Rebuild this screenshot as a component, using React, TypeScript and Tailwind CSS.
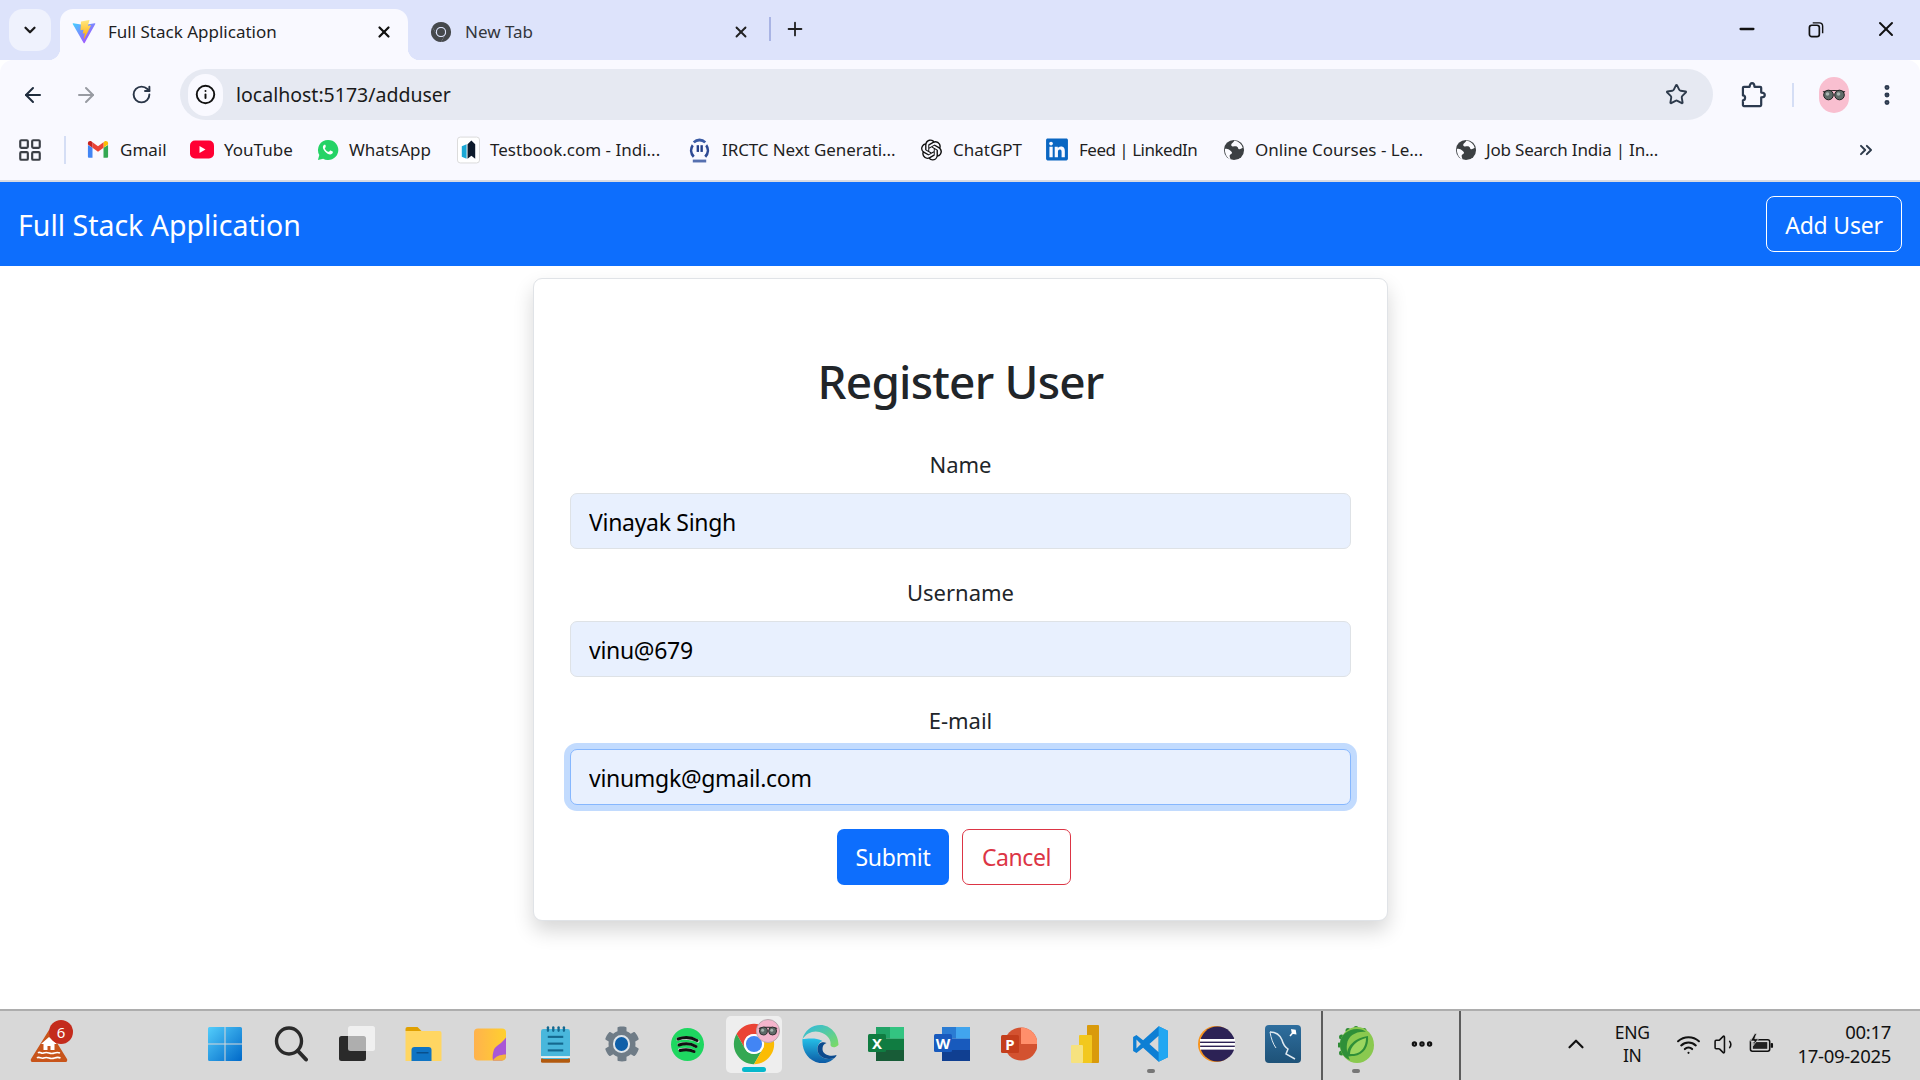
import React from "react";
import { ArrowLeft, ArrowRight, RotateCw, Info, Star, EllipsisVertical, ChevronDown, X, Plus, Minus, LayoutGrid, ChevronsRight, ChevronUp, Wifi, Volume1, Ellipsis } from "lucide-react";
import { FaLinkedin, FaCog, FaSpotify } from "react-icons/fa";
import { SiOpenai } from "react-icons/si";

const Vite = () => (
  <svg viewBox="0 0 32 32" className="w-[26px] h-[26px]">
    <defs>
      <linearGradient id="va" x1="0" y1="0" x2="1" y2="1"><stop offset="0" stopColor="#41d1ff" /><stop offset="1" stopColor="#bd34fe" /></linearGradient>
      <linearGradient id="vb" x1="0" y1="0" x2="0" y2="1"><stop offset="0" stopColor="#ffea83" /><stop offset="1" stopColor="#ffa800" /></linearGradient>
    </defs>
    <path d="M29.88 6.15 16.8 29.5a.7.7 0 0 1-1.23 0L2.12 6.15a.7.7 0 0 1 .75-1.04L16 7.46a.7.7 0 0 0 .25 0l12.88-2.35a.7.7 0 0 1 .75 1.04Z" fill="url(#va)" />
    <path d="M22.3 1.1 12.6 3a.35.35 0 0 0-.28.33l-.6 10.07a.35.35 0 0 0 .43.36l2.7-.62a.35.35 0 0 1 .43.41l-.8 3.93a.35.35 0 0 0 .45.41l1.67-.5a.35.35 0 0 1 .45.4l-1.28 6.18c-.08.39.43.6.65.27l.15-.23 7.9-15.77a.35.35 0 0 0-.38-.5l-2.78.54a.35.35 0 0 1-.4-.44l1.82-6.3a.35.35 0 0 0-.41-.44Z" fill="url(#vb)" />
  </svg>
);

const ChromeLogo = ({ r = "#ea4335", g = "#34a853", y = "#fbbc04", c = "#4285f4", ring = "#ffffff", size = "w-[44px] h-[44px]" }) => (
  <svg viewBox="0 0 48 48" className={size}>
    <path d="M43.05 13A22 22 0 0 0 4.95 13L14.47 29.5A11 11 0 0 1 24 13Z" fill={r} />
    <path d="M4.95 13A22 22 0 0 0 24 46L33.53 29.5A11 11 0 0 1 14.47 29.5Z" fill={g} />
    <path d="M24 46A22 22 0 0 0 43.05 13H24A11 11 0 0 1 33.53 29.5Z" fill={y} />
    <circle cx="24" cy="24" r="11" fill={ring} />
    <circle cx="24" cy="24" r="8.8" fill={c} />
  </svg>
);

const Globe = () => (
  <svg viewBox="0 0 24 24" className="w-[22px] h-[24px]">
    <circle cx="12" cy="12" r="11" fill="#3c4043" />
    <path d="M12.5 1.5c-1 2.5-3 2.5-3.5 4.5s2 2.5 3.5 2 3.5 0 4 2 3 1 5-.5c-1-4-4-7-9-8Z" fill="#fbfbff" />
    <path d="M2 11c2-1 4 0 6.500 2s1 3-.5 4-.5 3 .5 5.500C5 21.500 2 17 2 11Z" fill="#fbfbff" />
  </svg>
);

const Glasses = ({ w = 24 }: { w?: number }) => (
  <svg viewBox="0 0 24 12" width={w} height={w / 2}>
    <path d="M1 3c3-2 19-2 22 0" stroke="#222" strokeWidth="1.200" fill="none" />
    <circle cx="6.500" cy="6" r="4.800" fill="#5f6b68" stroke="#222" strokeWidth="1" />
    <circle cx="17.500" cy="6" r="4.800" fill="#5f6b68" stroke="#222" strokeWidth="1" />
    <circle cx="5.500" cy="5" r="1.800" fill="#aab6b2" />
    <circle cx="16.500" cy="5" r="1.800" fill="#aab6b2" />
  </svg>
);

const Gmail = () => (
  <svg viewBox="0 0 24 20" className="w-[22px] h-[19px]">
    <path d="M1 5v13a1 1 0 0 0 1 1h4V8Z" fill="#4285f4" />
    <path d="M18 8v11h4a1 1 0 0 0 1-1V5Z" fill="#34a853" />
    <path d="M18 2v6l5-3.500V3c0-2-2.300-3-4-1.800Z" fill="#fbbc04" />
    <path d="M6 8V2l6 4.500L18 2v6l-6 4.500Z" fill="#ea4335" />
    <path d="M1 3v1.500L6 8V2L5 1.200C3.300 0 1 1 1 3Z" fill="#c5221f" />
  </svg>
);

const YouTube = () => (
  <svg viewBox="0 0 24 18" className="w-[24px] h-[19px]">
    <rect width="24" height="18" rx="5" fill="#ff0033" />
    <path d="M9.500 5.500v7l6-3.500Z" fill="#fff" />
  </svg>
);

const WhatsApp = () => (
  <svg viewBox="0 0 24 24" className="w-[22px] h-[24px]">
    <path d="M12 1a11 11 0 0 0-9.500 16.500L1 23l5.700-1.500A11 11 0 1 0 12 1Z" fill="#25d366" />
    <path d="M8.300 6.300c-.5 0-1.500.7-1.800 2-.3 1.400.3 3.200 2.200 5.300 2 2.100 4 3.300 5.800 3.200 1.300 0 2.600-1 2.800-2 .1-.6 0-1-.2-1.100l-2.300-1.100c-.3-.1-.5 0-.7.200l-.9 1.100c-.2.200-.4.200-.7.100-1.700-.7-3-1.900-3.900-3.500-.1-.2-.1-.4.100-.6l.7-.9c.1-.2.200-.4.100-.6L9.400 6.900c-.2-.5-.5-.6-1.100-.6Z" fill="#fff" />
  </svg>
);

const Testbook = () => (
  <svg viewBox="0 0 24 28" className="w-[23px] h-[28px]">
    <rect x=".5" y=".5" width="23" height="27" rx="3" fill="#fff" stroke="#d9d9d9" />
    <path d="M5 10l5-2v15l-5-2Z" fill="#1ba8d5" />
    <path d="M11 8l4-4 4 4v15l-4-3-4 3Z" fill="#0e1b2c" />
  </svg>
);

const Irctc = () => (
  <svg viewBox="0 0 24 28" className="w-[23px] h-[28px]">
    <path d="M12 2a11 11 0 0 1 7 3l-2 2a8 8 0 0 0-5-2 8 8 0 0 0-5 2L5 5a11 11 0 0 1 7-3Z" fill="#3b5ba5" />
    <path d="M4 8l2 2a8 8 0 0 0 1 10l-2 2a11 11 0 0 1-1-14ZM20 8l-2 2a8 8 0 0 1-1 10l2 2a11 11 0 0 0 1-14Z" fill="#2e4a94" />
    <rect x="9" y="9" width="2.500" height="7" fill="#243f88" />
    <rect x="13" y="9" width="2.500" height="7" fill="#243f88" />
    <rect x="5" y="24" width="14" height="3" fill="#5670b0" />
  </svg>
);

const Bm = ({ outer, icon, children, w, text = "" }: { outer: string; icon: React.ReactNode; children: React.ReactNode; w: string; text?: string }) => (
  <div className={`flex items-center shrink-0 ${outer}`}>
    <span className={`flex items-center shrink-0 ${w}`}>{icon}</span>
    <span className={`text-[17px] text-[#1f1f1f] whitespace-nowrap ${text}`}>{children}</span>
  </div>
);

const Slot = ({ children }: { children: React.ReactNode }) => (
  <div className="relative flex w-[66.125px] h-full pb-[3px] items-center justify-center shrink-0">{children}</div>
);

const Dot = () => <span className="absolute left-1/2 -translate-x-1/2 bottom-[7px] w-[8px] h-[4px] rounded-full bg-[#777]" />;

const Weather = () => (
  <div className="relative w-[38px] h-[42px] mb-[8px]">
    <svg viewBox="0 0 38 34" className="absolute left-0 bottom-0 w-[38px] h-[34px]">
      <path d="M19 1 37 30a2 2 0 0 1-2 3H3a2 2 0 0 1-2-3Z" fill="#c8541a" />
      <path d="M19 8l-8 7h2.500v6h4v-4h3v4h4v-6H27Z" fill="#fff" />
      <path d="M8 24c2-2 3 1 5.500 0s3-1 5.500 0 3 1 5.500 0 3-1 5.500 0M7 29c2-2 4 1 6.500 0s3-1 5.500 0 3 1 5.500 0 4-1 6 0" stroke="#fff" strokeWidth="1.600" fill="none" />
    </svg>
    <span className="absolute right-[-5px] top-[-1px] w-[24px] h-[24px] rounded-full bg-[#c42b1c] text-white text-[15px] leading-[24px] text-center">6</span>
  </div>
);

const Start = () => (
  <svg viewBox="0 0 36 36" className="w-[36px] h-[36px]">
    <defs>
      <linearGradient id="st" x1="0" y1="0" x2="1" y2="1"><stop offset="0" stopColor="#53cdfb" /><stop offset="1" stopColor="#0068c8" /></linearGradient>
    </defs>
    <path d="M1 2.500A1.500 1.500 0 0 1 2.500 1H17.500V17.500H1ZM18.500 1H33.500A1.500 1.500 0 0 1 35 2.500V17.500H18.500ZM1 18.500H17.500V35H2.500A1.500 1.500 0 0 1 1 33.500ZM18.500 18.500H35V33.500A1.500 1.500 0 0 1 33.500 35H18.500Z" fill="url(#st)" />
  </svg>
);

const Search = () => (
  <svg viewBox="0 0 34 36" className="w-[34px] h-[36px]">
    <ellipse cx="15" cy="15" rx="12.500" ry="13" fill="none" stroke="#2a2a2a" strokeWidth="3.400" />
    <path d="M24 25l8 8.500" stroke="#2a2a2a" strokeWidth="4" strokeLinecap="round" />
  </svg>
);

const TaskView = () => (
  <svg viewBox="0 0 36 36" className="w-[36px] h-[36px]">
    <rect x="0" y="10" width="27" height="25" rx="2.500" fill="#2a2a2a" />
    <rect x="9" y="0" width="27" height="25" rx="2.500" fill="#ffffff" fillOpacity=".62" />
  </svg>
);

const Explorer = () => (
  <svg viewBox="0 0 36 36" className="w-[37px] h-[36px]">
    <path d="M0 3a2 2 0 0 1 2-2h10l4 4H0Z" fill="#e0a000" />
    <path d="M0 5h34a2 2 0 0 1 2 2v28H0Z" fill="#ffd662" />
    <path d="M6 24a3 3 0 0 1 3-3h14a3 3 0 0 1 3 3v11H6Z" fill="#0f74c4" />
    <rect x="11" y="26" width="12" height="1.500" fill="#084f8c" />
  </svg>
);

const Sticky = () => (
  <svg viewBox="0 0 32 32" className="w-[32px] h-[33px]">
    <defs>
      <linearGradient id="sn" x1="0" y1="0" x2="1" y2="0"><stop offset="0" stopColor="#ffb24d" /><stop offset="1" stopColor="#ffd02e" /></linearGradient>
    </defs>
    <rect width="32" height="32" rx="4" fill="url(#sn)" />
    <path d="M32 9c-4 6-10 8-12 12-1 3-2 7-1 11h9c3-1 4-3 4-6Z" fill="#a957d6" />
    <path d="M19 32c2-4 7-6 13-6 0 4-2 6-5 6Z" fill="#f4b63d" />
  </svg>
);

const Notepad = () => (
  <svg viewBox="0 0 30 38" className="w-[29px] h-[37px]">
    <rect x="0" y="33" width="30" height="5" rx="1.500" fill="#b25a0f" />
    <rect x="0" y="3" width="30" height="31" rx="2.500" fill="#49b7dc" />
    <rect x="0" y="31" width="30" height="2" fill="#e8f0f2" />
    <g fill="#14688f"><rect x="6" y="0" width="2.400" height="6" rx="1.200" /><rect x="11.500" y="0" width="2.400" height="6" rx="1.200" /><rect x="17" y="0" width="2.400" height="6" rx="1.200" /><rect x="22.500" y="0" width="2.400" height="6" rx="1.200" /></g>
    <g fill="#14688f"><rect x="7" y="10" width="16" height="2.200" /><rect x="7" y="17" width="16" height="2.200" /><rect x="7" y="24" width="16" height="2.200" /></g>
  </svg>
);

const Settings = () => (
  <span className="relative flex w-[36px] h-[36px] items-center justify-center">
    <FaCog className="w-[36px] h-[36px] text-[#6f7c87]" />
    <span className="absolute w-[17px] h-[18px] rounded-full bg-[#0f5fa8] border-[2px] border-[#dfe5ea]" />
  </span>
);

const Spotify = () => (
  <span className="relative flex w-[33px] h-[37px] items-center justify-center">
    <FaSpotify className="w-[33px] h-[37px] text-[#1ed760]" />
    <svg viewBox="0 0 33 37" className="absolute inset-0 w-[33px] h-[37px]">
      <path d="M7 13c6-2 13-2 19 1.500M8 19c5-1.500 12-1.500 17 1.500M9 24.500c4-1 10-1 14 1" stroke="#111" strokeWidth="3" strokeLinecap="round" fill="none" />
    </svg>
  </span>
);

const Edge = () => (
  <svg viewBox="0 0 36 38" className="w-[37px] h-[38px]">
    <defs>
      <linearGradient id="eb" x1="0" y1="0" x2="0" y2="1"><stop offset="0" stopColor="#25c0e8" /><stop offset="1" stopColor="#0c59a4" /></linearGradient>
      <linearGradient id="eg" x1="0" y1="0" x2="1" y2="1"><stop offset="0" stopColor="#2bb8e5" /><stop offset="1" stopColor="#7fdc5f" /></linearGradient>
    </defs>
    <path d="M36 20c0-11-8-20-18-20C9 0 2 6 0 14c4-6 11-9 17-7 8 2 12 8 11 13 0 2 4 4 8 0Z" fill="url(#eg)" />
    <path d="M0 14C-1 26 6 36 17 38c6 1 11-1 15-5-8 3-17-1-17-9 0-4 2-7 5-8-7-4-16-2-20-2Z" fill="url(#eb)" />
    <path d="M15 24c0 8 9 12 17 9 1-1 2-2 2-3-6 2-14 0-14-6 0-3 1-5 4-6-5-2-9 1-9 6Z" fill="#0b4a8e" />
  </svg>
);

const Office = ({ letter, a, b, c, d, box }: { letter: string; a: string; b: string; c: string; d: string; box: string }) => (
  <svg viewBox="0 0 36 36" className="w-[36px] h-[36px]">
    <rect x="8" y="1" width="28" height="11.500" fill={a} />
    <rect x="8" y="12.500" width="28" height="11.500" fill={b} />
    <rect x="8" y="24" width="28" height="11" fill={c} />
    <rect x="22" y="1" width="14" height="11.500" fill={d} />
    <rect x="0" y="8" width="18" height="18" rx="1.500" fill={box} />
    <text x="9" y="22.500" textAnchor="middle" fontSize="15" fontWeight="700" fill="#fff" fontFamily="Noto Sans, sans-serif">{letter}</text>
  </svg>
);

const Ppt = () => (
  <svg viewBox="0 0 36 36" className="w-[36px] h-[36px]">
    <circle cx="20" cy="18" r="16.500" fill="#d35230" />
    <path d="M20 1.500A16.500 16.500 0 0 1 36.500 18H20Z" fill="#ff8f6b" />
    <rect x="0" y="9" width="18" height="18" rx="1.500" fill="#c43e1c" />
    <text x="9" y="23.500" textAnchor="middle" fontSize="15" fontWeight="700" fill="#fff" fontFamily="Noto Sans, sans-serif">P</text>
  </svg>
);

const PowerBi = () => (
  <svg viewBox="0 0 28 38" className="w-[28px] h-[38px]">
    <rect x="16" y="0" width="12" height="38" rx="1" fill="#d99a0b" />
    <rect x="8" y="10" width="13" height="28" rx="1" fill="#f2c81e" />
    <rect x="0" y="20" width="12" height="18" rx="1" fill="#f6e27f" />
  </svg>
);

const VsCode = () => (
  <svg viewBox="0 0 100 100" className="w-[37px] h-[38px]">
    <path fillRule="evenodd" d="M72 2 97 14v72L72 98 30 60 12 74 3 69V31l9-5 18 14ZM72 28 47 50l25 22ZM12 38v24l12-12Z" fill="#0d7fd4" />
    <path d="M72 2 97 14v72L72 98V72L72 28Z" fill="#22a7f2" />
  </svg>
);

const Eclipse = () => (
  <svg viewBox="0 0 37 38" className="w-[37px] h-[38px]">
    <circle cx="18" cy="19" r="18" fill="#f7941e" />
    <circle cx="19.500" cy="19" r="17.500" fill="#2c2255" />
    <rect x="2" y="14" width="35" height="2.600" fill="#fff" />
    <rect x="2" y="18" width="35" height="2.600" fill="#fff" />
    <rect x="2" y="22" width="35" height="2.600" fill="#fff" />
  </svg>
);

const Workbench = () => (
  <svg viewBox="0 0 36 38" className="w-[36px] h-[38px]">
    <defs>
      <linearGradient id="wb" x1="0" y1="0" x2="0" y2="1"><stop offset="0" stopColor="#2e6e9e" /><stop offset="1" stopColor="#1e5278" /></linearGradient>
    </defs>
    <rect width="36" height="38" rx="4" fill="url(#wb)" />
    <path d="M5 7c6 0 10 3 12 8 1 4 3 7 6 9l-2 5 9 5" stroke="#dfe9f0" strokeWidth="1.500" fill="none" />
    <path d="M5 7c1 6 3 12 6 16" stroke="#dfe9f0" strokeWidth="1" fill="none" />
    <path d="M25 11l3.500-4M27 5l3 .5.500 3-3-.5Z" stroke="#fff" strokeWidth="1.600" fill="#fff" />
  </svg>
);

const Spring = () => (
  <svg viewBox="0 0 36 38" className="w-[36px] h-[38px]">
    <g fill="#2e8b35"><circle cx="18" cy="3.500" r="2.500" /><circle cx="10" cy="5.500" r="2.500" /><circle cx="26" cy="5.500" r="2.500" /><circle cx="3.500" cy="12" r="2.500" /><circle cx="1.500" cy="20" r="2.500" /><circle cx="3.500" cy="28" r="2.500" /></g>
    <ellipse cx="19" cy="20" rx="17" ry="18" fill="#8ac94f" />
    <path d="M2 19C2 11 9 4 19 4c4 0 7 1 9 3-10-1-18 4-19 12-1 6 1 12 3 16C6 33 2 27 2 19Z" fill="#2f8f38" />
    <path d="M9 32c-1-11 8-19 21-21 1 10-4 19-14 20-3 0-5 0-7 1Z" fill="#2f8f38" />
    <path d="M12 29c0-8 8-14 16-16 0 8-4 15-12 16-2 0-3 0-4 0Z" fill="#9bd65f" />
  </svg>
);

const Battery = () => (
  <svg viewBox="0 0 26 22" className="w-[25px] h-[22px]">
    <rect x="1.500" y="6.500" width="20" height="12" rx="2" fill="none" stroke="#111" strokeWidth="1.600" />
    <rect x="4" y="9" width="15" height="7" fill="#222" />
    <rect x="22.500" y="10" width="2.500" height="5" rx="1" fill="#111" />
    <path d="M6 0 1.500 8h4L4 13l6-7.500H6l2-5.500Z" fill="#111" stroke="#d8d8d8" strokeWidth=".8" />
  </svg>
);

const Field = ({ label, value, focus }: { label: string; value: string; focus?: boolean }) => (
  <div className="mb-[28px]">
    <label className="block h-[30px] mb-[14px] text-[22px] leading-[30px] text-center text-[#212529]">{label}</label>
    <input
      readOnly
      value={value}
      className={
        focus
          ? "block w-full h-[56px] px-[18px] pt-[1px] rounded-[7px] bg-[#e8f0fe] text-[23px] tracking-[-0.3px] text-black outline-none border border-[#86b7fe] shadow-[0_0_0_6px_rgba(13,110,253,0.25)]"
          : "block w-full h-[56px] px-[18px] pt-[2px] rounded-[7px] bg-[#e8f0fe] text-[23px] tracking-[-0.3px] text-black outline-none border border-[#dee2e6]"
      }
    />
  </div>
);

export default function App() {
  return (
    <div className="flex flex-col w-[1920px] h-[1080px] overflow-hidden bg-white font-['Noto_Sans',sans-serif]">
      {/* tab strip */}
      <div className="flex h-[60px] shrink-0 bg-[#dde3fb] pt-[9px]">
        <div className="ml-[9px] w-[42px] h-[42px] rounded-[14px] bg-[#eff2fd] flex items-center justify-center">
          <ChevronDown size={18} strokeWidth={3} className="text-[#1a1a1a]" />
        </div>
        <div className="relative ml-[9px] w-[348px] h-[51px] rounded-t-[13px] bg-[#f9f9ff] flex items-center pl-[11px] pb-[5px]">
          <span className="absolute -left-[12px] bottom-0 w-[12px] h-[12px] bg-[radial-gradient(circle_at_0_0,transparent_12px,#f9f9ff_12.500px)]" />
          <span className="absolute -right-[12px] bottom-0 w-[12px] h-[12px] bg-[radial-gradient(circle_at_100%_0,transparent_12px,#f9f9ff_12.500px)]" />
          <Vite />
          <span className="ml-[11px] text-[17px] text-[#1f1f1f] whitespace-nowrap">Full Stack Application</span>
          <X size={18} strokeWidth={3} className="ml-auto mr-[15px] text-[#111]" />
        </div>
        <div className="ml-[22px] w-[339px] h-[51px] flex items-center pb-[5px]">
          <ChromeLogo r="#45484c" g="#45484c" y="#45484c" c="#45484c" ring="#dde3fb" size="w-[22px] h-[24px]" />
          <span className="ml-[13px] text-[17px] text-[#33363b] whitespace-nowrap">New Tab</span>
          <X size={18} strokeWidth={2.500} className="ml-auto mr-[19px] text-[#222]" />
        </div>
        <div className="w-[2px] h-[24px] mt-[8px] bg-[#a9b4e4]" />
        <Plus size={22} strokeWidth={2} className="ml-[13px] mt-[9px] text-[#222]" />
        <Minus size={22} strokeWidth={2.500} className="ml-auto mt-[9px] text-[#111]" />
        <svg viewBox="0 0 18 18" className="ml-[50px] mt-[12px] w-[17px] h-[17px]">
          <rect x="1.500" y="4.500" width="10.500" height="12" rx="2.500" fill="none" stroke="#111" strokeWidth="1.800" />
          <path d="M5 2h7a3.500 3.500 0 0 1 3.500 3.500V13" fill="none" stroke="#111" strokeWidth="1.500" />
        </svg>
        <X size={24} strokeWidth={2} className="ml-[49px] mr-[22px] mt-[8px] text-[#111]" />
      </div>

      {/* toolbar */}
      <div className="flex h-[60px] shrink-0 items-center bg-[#f9f9ff] rounded-t-[13px] pt-[9px]">
        <ArrowLeft size={24} strokeWidth={2} className="ml-[21px] text-[#1f2c3d]" />
        <ArrowRight size={24} strokeWidth={2} className="ml-[29px] text-[#989ba2]" />
        <RotateCw size={21} strokeWidth={2.200} className="ml-[33px] text-[#2a3648]" />
        <div className="ml-[28px] w-[1533px] h-[51px] rounded-full bg-[#e6e9f2] flex items-center pl-[8px] pr-[25px]">
          <span className="w-[35px] h-[42px] rounded-full bg-[#f9f9ff] flex items-center justify-center">
            <Info size={21} strokeWidth={2.200} className="text-[#111]" />
          </span>
          <span className="ml-[13px] text-[19.500px] text-[#1a1a1a]">localhost:5173/adduser</span>
          <Star size={23} strokeWidth={2} className="ml-auto text-[#2d3a4b]" />
        </div>
        <svg viewBox="0 0 26 30" className="ml-[28px] w-[25px] h-[29px]">
          <path d="M3 7h6c0-5 5-5 5 0h6a1 1 0 0 1 1 1v5c5 0 5 5 0 5v8a1 1 0 0 1-1 1H3a1 1 0 0 1-1-1v-5c3 0 3-5 0-5V8a1 1 0 0 1 1-1Z" fill="none" stroke="#2c3a4f" strokeWidth="2.300" strokeLinejoin="round" />
        </svg>
        <div className="ml-[26px] w-[2px] h-[24px] bg-[#d5def5]" />
        <span className="ml-[25px] w-[30px] h-[36px] rounded-full bg-[#f9bfd0] flex items-center justify-center">
          <Glasses w={24} />
        </span>
        <EllipsisVertical size={26} strokeWidth={2.600} className="ml-[25px] text-[#2c3a4f]" />
      </div>

      {/* bookmarks */}
      <div className="flex h-[62px] shrink-0 items-center bg-[#f9f9ff] border-b-[2px] border-[#d9dbe2] pb-[1px]">
        <LayoutGrid size={26} strokeWidth={2} className="ml-[17px] text-[#3b3f46]" />
        <div className="ml-[21px] mr-[21px] w-[2px] h-[28px] bg-[#d5def5]" />
        <Bm outer="w-[103px]" w="w-[33px]" icon={<Gmail />}>Gmail</Bm>
        <Bm outer="w-[127px]" w="w-[34px]" icon={<YouTube />}>YouTube</Bm>
        <Bm outer="w-[140px]" w="w-[32px]" icon={<WhatsApp />}>WhatsApp</Bm>
        <Bm outer="w-[231px]" w="w-[33px]" icon={<Testbook />}>Testbook.com - Indi...</Bm>
        <Bm outer="w-[233px]" w="w-[34px]" text="tracking-[-0.1px]" icon={<Irctc />}>IRCTC Next Generati...</Bm>
        <Bm outer="w-[125px]" w="w-[32px]" icon={<SiOpenai className="w-[21px] h-[24px] text-[#111]" />}>ChatGPT</Bm>
        <Bm outer="w-[177px]" w="w-[33px]" text="tracking-[-0.5px]" icon={<FaLinkedin className="w-[22px] h-[25px] text-[#0a66c2]" />}>Feed | LinkedIn</Bm>
        <Bm outer="w-[232px]" w="w-[32px]" icon={<Globe />}>Online Courses - Le...</Bm>
        <Bm outer="w-[300px]" w="w-[31px]" text="tracking-[-0.2px]" icon={<Globe />}>Job Search India | In...</Bm>
        <ChevronsRight size={20} strokeWidth={2.400} className="ml-auto mr-[44px] text-[#2d3a4b]" />
      </div>

      {/* app navbar */}
      <nav className="flex h-[84px] shrink-0 items-center justify-between bg-[#0d6efd] pl-[18px] pr-[18px]">
        <span className="mt-[2px] text-[28.500px] text-white whitespace-nowrap">Full Stack Application</span>
        <button className="w-[136px] h-[56px] pt-[2px] rounded-[8px] border border-white text-white text-[23px] tracking-[-0.2px]">Add User</button>
      </nav>

      {/* main */}
      <main className="flex-1 min-h-0">
        <div className="mt-[12px] ml-[533px] w-[855px] h-[643px] bg-white rounded-[9px] border border-[#e0e3e7] shadow-[0_10px_20px_rgba(0,0,0,0.16)] px-[36px] pt-[78px]">
          <h2 className="h-[48px] mb-[44px] text-[46px] leading-[48px] font-medium tracking-[-0.8px] text-center text-[#212529]">Register User</h2>
          <Field label="Name" value="Vinayak Singh" />
          <Field label="Username" value="vinu@679" />
          <Field label="E-mail" value="vinumgk@gmail.com" focus />
          <div className="-mt-[4px] pr-[13px] flex justify-center gap-[13px]">
            <button className="w-[112px] h-[56px] pt-[1px] rounded-[7px] bg-[#0d6efd] text-white text-[23px] tracking-[-0.3px]">Submit</button>
            <button className="w-[109px] h-[56px] pt-[1px] rounded-[7px] border border-[#dc3545] text-[#dc3545] text-[23px] tracking-[-0.4px]">Cancel</button>
          </div>
        </div>
      </main>

      {/* taskbar */}
      <footer className="flex h-[71px] shrink-0 bg-[#d8d8d8] border-t-[2px] border-[#adadad]">
        <div className="ml-[30px] w-[162px] flex items-center">
          <Weather />
        </div>
        <Slot><Start /></Slot>
        <Slot><Search /></Slot>
        <Slot><TaskView /></Slot>
        <Slot><Explorer /></Slot>
        <Slot><Sticky /></Slot>
        <Slot><Notepad /></Slot>
        <Slot><Settings /></Slot>
        <Slot><Spotify /></Slot>
        <Slot>
          <div className="relative w-[56px] h-[57px] rounded-[5px] bg-[#eeeeee] flex items-center justify-center">
            <ChromeLogo />
            <span className="absolute right-[2px] top-[3px] w-[24px] h-[24px] rounded-full bg-[#f5b5cc] border border-[#b9a8ae] flex items-center justify-center">
              <Glasses w={20} />
            </span>
            <span className="absolute left-1/2 -translate-x-1/2 bottom-[1px] w-[24px] h-[5px] rounded-full bg-[#05b8cc]" />
          </div>
        </Slot>
        <Slot><Edge /></Slot>
        <Slot><Office letter="X" a="#21a366" b="#107c41" c="#185c37" d="#33c481" box="#107c41" /></Slot>
        <Slot><Office letter="W" a="#2b7cd3" b="#185abd" c="#103f91" d="#41a5ee" box="#185abd" /></Slot>
        <Slot><Ppt /></Slot>
        <Slot><PowerBi /></Slot>
        <Slot><VsCode /><Dot /></Slot>
        <Slot><Eclipse /></Slot>
        <Slot><Workbench /></Slot>
        <div className="ml-[5px] w-[2px] h-full bg-[#5c5c5c]" />
        <Slot><Spring /><Dot /></Slot>
        <Ellipsis size={26} strokeWidth={3} className="self-center text-[#111] mb-[3px] ml-[20px]" />
        <div className="ml-[24px] w-[2px] h-full bg-[#5c5c5c]" />
        <ChevronUp size={26} strokeWidth={2} className="self-center mb-[3px] ml-[102px] text-[#111]" />
        <div className="ml-[23px] mb-[3px] w-[40px] self-center text-center text-[17.500px] leading-[23px] tracking-[-0.3px] text-[#111]">
          <div>ENG</div>
          <div>IN</div>
        </div>
        <Wifi size={25} strokeWidth={2} className="self-center mb-[3px] ml-[24px] text-[#111]" />
        <Volume1 size={25} strokeWidth={1.500} className="self-center mb-[3px] ml-[12px] text-[#111]" />
        <span className="self-center mb-[3px] ml-[11px]"><Battery /></span>
        <div className="ml-auto mr-[29px] mb-[4px] self-center text-right text-[18.500px] leading-[24px] tracking-[-0.3px] text-[#111]">
          <div>00:17</div>
          <div>17-09-2025</div>
        </div>
      </footer>
    </div>
  );
}
